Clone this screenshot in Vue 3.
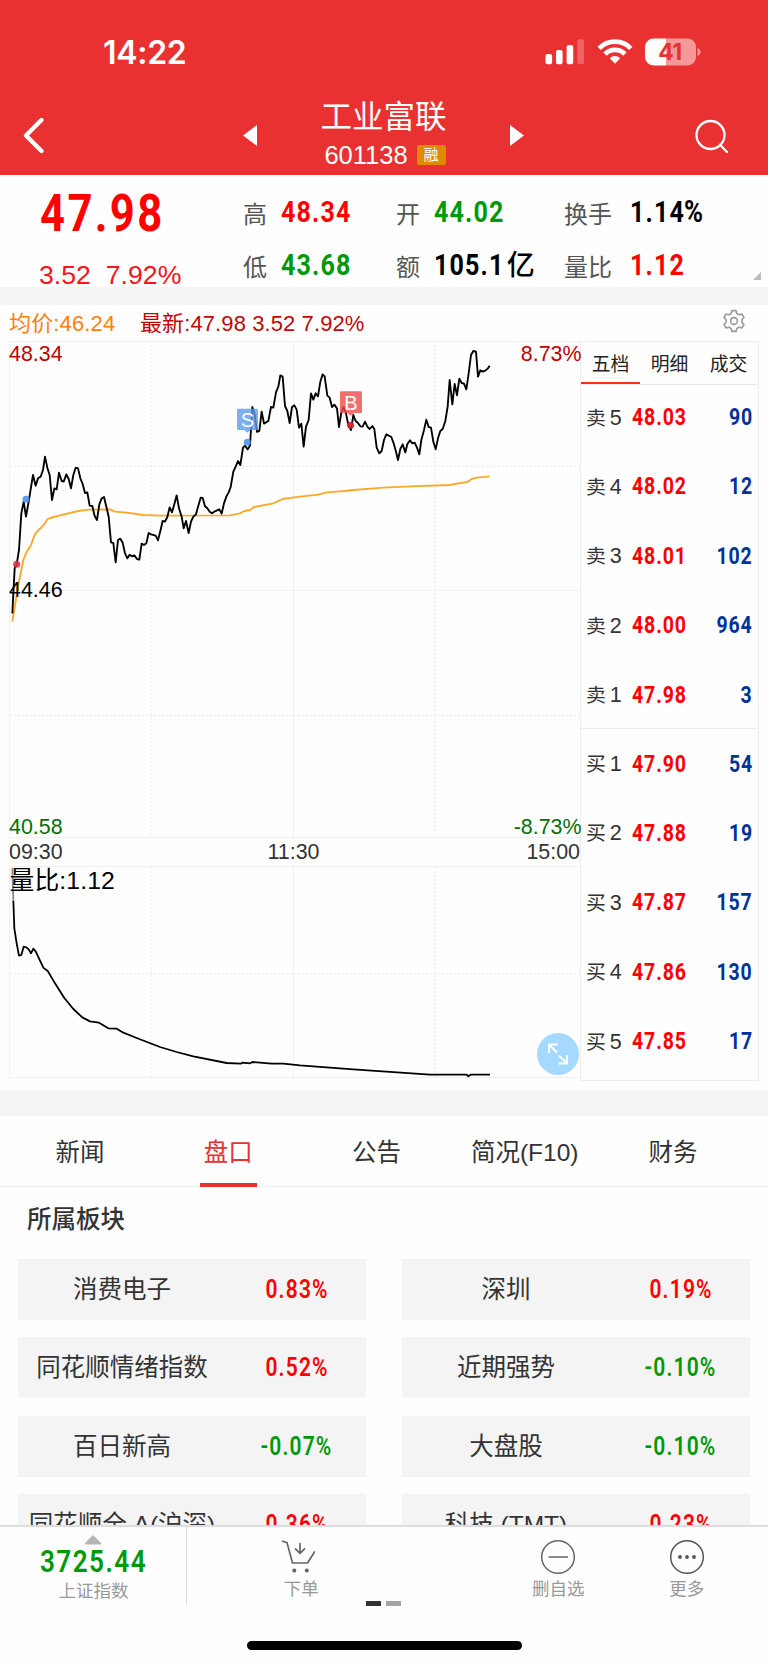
<script setup>
const stats = [
  [{ k: '高', v: '48.34', c: 'up' }, { k: '开', v: '44.02', c: 'down' }, { k: '换手', v: '1.14', p: '%', c: 'flat' }],
  [{ k: '低', v: '43.68', c: 'down' }, { k: '额', v: '105.1', u: '亿', c: 'flat' }, { k: '量比', v: '1.12', c: 'up' }],
]
const asks = [
  ['卖', 5, '48.03', 90], ['卖', 4, '48.02', 12], ['卖', 3, '48.01', 102], ['卖', 2, '48.00', 964], ['卖', 1, '47.98', 3],
]
const bids = [
  ['买', 1, '47.90', 54], ['买', 2, '47.88', 19], ['买', 3, '47.87', 157], ['买', 4, '47.86', 130], ['买', 5, '47.85', 17],
]
const tabs = ['新闻', '盘口', '公告', '简况(F10)', '财务']
const sectors = [
  ['消费电子', '0.83%'], ['深圳', '0.19%'],
  ['同花顺情绪指数', '0.52%'], ['近期强势', '-0.10%'],
  ['百日新高', '-0.07%'], ['大盘股', '-0.10%'],
  ['同花顺全 A(沪深)', '0.36%'], ['科技 (TMT)', '0.23%'],
]
const priceLine = '37,835 44,700 50,688 57,645 64,535 71,500 78,545 86,500 99,420 107,452 114,430 122,425 129,405 135,365 142,398 149,420 156,495 163,460 170,463 177,413 185,438 191,440 199,418 206,432 213,460 220,420 227,398 234,400 241,430 248,447 255,474 262,472 269,512 277,513 284,543 291,555 298,508 305,490 312,486 319,515 326,545 333,622 340,624 347,682 354,615 361,611 368,623 375,655 382,670 389,659 396,664 403,661 411,672 418,674 425,626 432,630 439,625 446,594 453,598 467,602 474,616 481,588 488,558 495,560 502,546 509,517 516,532 523,508 530,481 537,520 545,545 551,580 558,558 566,594 573,560 580,545 588,538 595,512 602,488 608,489 615,514 622,520 629,530 636,535 643,530 658,523 665,536 672,505 679,485 686,472 692,456 700,410 707,395 714,378 721,390 729,338 735,332 743,343 750,332 757,216 764,238 771,291 778,288 785,230 792,266 805,258 813,216 820,218 828,172 835,155 841,121 848,125 855,213 862,228 869,264 876,216 883,211 890,224 897,278 904,266 911,335 918,275 926,255 933,175 940,194 947,175 954,184 961,140 968,118 974,124 982,182 989,188 996,216 1003,209 1011,220 1017,276 1024,232 1031,216 1038,235 1045,270 1053,285 1060,240 1067,258 1074,264 1081,274 1088,275 1095,260 1102,275 1109,282 1117,273 1123,282 1130,338 1138,355 1145,348 1152,315 1159,298 1174,306 1181,325 1188,350 1194,375 1201,342 1208,328 1216,352 1222,328 1230,316 1237,325 1244,323 1251,338 1258,358 1264,315 1272,285 1279,254 1286,276 1293,278 1300,320 1307,343 1314,310 1321,288 1328,282 1336,258 1343,215 1349,135 1357,208 1364,147 1371,181 1378,131 1385,144 1392,146 1399,163 1406,115 1413,60 1420,48 1428,50 1434,125 1441,106 1448,110 1456,107 1463,101 1469,92'
const avgLine = '37,860 50,780 57,740 64,705 71,672 78,655 93,630 103,602 110,591 130,571 143,552 150,549 180,541 235,528 265,524 330,523 345,530 380,533 430,540 480,542 690,541 720,535 733,528 750,525 762,516 820,505 848,492 900,485 955,479 980,472 1035,468 1060,465 1150,458 1230,454 1350,450 1375,445 1402,441 1415,432 1430,428 1469,424'
const volLine = '37,204 40,303 43,385 50,430 57,467 64,465 71,440 79,442 86,448 93,460 100,446 107,454 130,503 144,514 165,550 193,594 220,627 247,652 270,664 297,668 325,685 350,686 370,698 410,714 480,741 530,756 580,769 680,789 722,791 727,788 750,790 757,786 815,791 850,791 900,796 1060,808 1290,824 1400,824 1405,829 1412,824 1470,824'
const gear = (() => {
  const pts = []
  for (let i = 0; i < 6; i++) {
    const a = (i * 60 - 90) * Math.PI / 180
    for (const [d, r] of [[-0.36, 8], [-0.19, 10.6], [0.19, 10.6], [0.36, 8]]) {
      pts.push(`${(12 + r * Math.cos(a + d)).toFixed(2)},${(12 + r * Math.sin(a + d)).toFixed(2)}`)
    }
  }
  return pts.join(' ')
})()
</script>

<template>
  <div class="screen">
    <header class="top">
      <div class="status">
        <span class="clock">14:22</span>
        <svg class="sys" width="156" height="28" viewBox="0 0 156 28">
          <g fill="#fff">
            <rect x="0.5" y="16" width="6.6" height="10.3" rx="2" />
            <rect x="11" y="12" width="6.6" height="14.3" rx="2" />
            <rect x="21.6" y="7" width="6.6" height="19.3" rx="2" />
            <rect x="32.4" y="1.3" width="6.6" height="25" rx="2" opacity=".25" />
            <path d="M70 25.7 L64.8 20.2 A7.4 7.4 0 0 1 75.2 20.2 Z" />
          </g>
          <g fill="none" stroke="#fff" stroke-width="4.8">
            <path d="M54.2 10.3 A22 22 0 0 1 85.8 10.3" />
            <path d="M60 16 A14 14 0 0 1 80 16" />
          </g>
          <path d="M121 .5 H108.5 a8.5 8.5 0 0 0 -8.5 8.5 v10 a8.5 8.5 0 0 0 8.5 8.5 H121 Z" fill="#fff" />
          <path d="M121 .5 H142.5 a8.5 8.5 0 0 1 8.5 8.5 v10 a8.5 8.5 0 0 1 -8.5 8.5 H121 Z" fill="#fff" opacity=".5" />
          <path d="M152.5 10 q3 1 3 4 t-3 4 Z" fill="#fff" opacity=".5" />
          <text x="125" y="22" text-anchor="middle" class="bat">41</text>
        </svg>
      </div>
      <div class="nav">
        <svg class="back" width="24" height="40" viewBox="0 0 24 40"><path d="M20.5 5 L5 20.5 L20.5 36" fill="none" stroke="#fff" stroke-width="4.4" stroke-linecap="round" stroke-linejoin="round" /></svg>
        <svg class="tri" width="14" height="22" viewBox="0 0 14 22"><path d="M14 0 V21 L0 10.5 Z" fill="#fff" /></svg>
        <div class="title">
          <div class="name">工业富联</div>
          <div class="code"><span>601138</span><i>融</i></div>
        </div>
        <svg class="tri" width="14" height="22" viewBox="0 0 14 22"><path d="M0 0 V21 L14 10.5 Z" fill="#fff" /></svg>
        <svg class="search" width="36" height="36" viewBox="0 0 36 36"><g fill="none" stroke="#fff" stroke-width="2.3"><circle cx="16.5" cy="16" r="14" /><path d="M26 25.8 L33 33" stroke-linecap="round" /></g></svg>
      </div>
    </header>

    <section class="quote">
      <div class="last">
        <div class="big"><span class="din">47.98</span></div>
        <div class="chg">3.52&nbsp; 7.92%</div>
      </div>
      <div class="stats">
        <div v-for="(row, i) in stats" :key="i" class="srow">
          <div v-for="s in row" :key="s.k" class="stat">
            <label>{{ s.k }}</label>
            <span class="val" :class="s.c"><span class="din">{{ s.v }}<small v-if="s.p">{{ s.p }}</small></span><em v-if="s.u">{{ s.u }}</em></span>
          </div>
        </div>
      </div>
      <svg class="corner" width="8" height="8" viewBox="0 0 8 8"><path d="M8 0 V8 H0 Z" fill="#bbb" /></svg>
    </section>
    <div class="gap"></div>

    <section class="market">
      <div class="legend">
        <span class="avg">均价:46.24</span><span class="cur">最新:47.98 3.52 7.92%</span>
        <svg class="gear" width="24" height="24" viewBox="0 0 24 24"><g fill="none" stroke="#999" stroke-width="1.6" stroke-linejoin="round"><polygon :points="gear" /><circle cx="12" cy="12" r="3.4" /></g></svg>
      </div>
      <div class="body">
        <div class="charts">
          <svg width="581" height="737" viewBox="0 341 581 737">
            <g fill="none" stroke="#efefef" stroke-width="1">
              <path d="M9.5 341.5 H581 M9.5 590.5 H581 M9.5 837.5 H581 M9.5 866.5 H581 M9.5 1077.5 H581 M9.5 341.5 V838 M9.5 866.5 V1078 M293.5 341.5 V838 M293.5 866.5 V1078" />
              <path stroke-dasharray="2 2" stroke-width="1.4" d="M151 341 V838 M435 341 V838 M151 867 V1078 M435 867 V1078 M10 466.5 H580 M10 715.5 H580 M10 973.5 H580" />
            </g>
            <g transform="translate(0 335) scale(.33333)" fill="none" stroke-linejoin="round">
              <polyline :points="avgLine" stroke="#ffa826" stroke-width="5.6" />
              <polyline :points="priceLine" stroke="#000" stroke-width="5.6" />
              <circle cx="50" cy="688" r="10.5" fill="#dd3344" opacity=".9" />
              <circle cx="78" cy="493" r="10.5" fill="#4c92f0" opacity=".9" />
              <circle cx="742" cy="322" r="10.5" fill="#4c92f0" opacity=".9" />
              <circle cx="1052" cy="271" r="10.5" fill="#e0232e" opacity=".9" />
              <path d="M715 221 h55 q4 0 4 4 v56 q0 4 -4 4 h-18 l-10 8 l-10 -8 h-17 q-4 0 -4 -4 v-56 q0 -4 4 -4 Z" fill="#5c9bee" opacity=".8" />
              <path d="M1024 169 h58 q4 0 4 4 v57 q0 4 -4 4 h-20 l-10 8 l-10 -8 h-18 q-4 0 -4 -4 v-57 q0 -4 4 -4 Z" fill="#ec4b4b" opacity=".8" />
            </g>
            <g transform="translate(0 800) scale(.33333)" fill="none">
              <polyline :points="volLine" stroke="#000" stroke-width="5.4" stroke-linejoin="round" />
            </g>
            <rect x="10" y="867" width="107" height="34" fill="#fefefe" opacity=".55" />
            <g class="t">
              <text x="247.3" y="427" class="mk">S</text>
              <text x="351" y="409.5" class="mk">B</text>
              <text x="9" y="361" fill="#c00000">48.34</text>
              <text x="9" y="597" fill="#000">44.46</text>
              <text x="9" y="834" fill="#007000">40.58</text>
              <text x="581.5" y="361" fill="#c00000" text-anchor="end">8.73%</text>
              <text x="581.5" y="834" fill="#007000" text-anchor="end">-8.73%</text>
              <text x="9" y="859" fill="#333">09:30</text>
              <text x="293.5" y="859" fill="#333" text-anchor="middle">11:30</text>
              <text x="580" y="859" fill="#333" text-anchor="end">15:00</text>
              <text x="9.5" y="889" fill="#000" class="vr">量比:1.12</text>
            </g>
          </svg>
          <button class="expand">
            <svg width="42" height="42" viewBox="0 0 42 42"><g fill="none" stroke="#fff" stroke-width="2"><path d="M12 20 V11.5 H20.5 M12 11.5 L20 19.5" /><path d="M30 22 V30.5 H21.5 M30 30.5 L22 22.5" /></g></svg>
          </button>
        </div>
        <aside class="book">
          <div class="btabs"><span class="on">五档</span><span>明细</span><span>成交</span></div>
          <div class="rows">
            <div v-for="r in asks" :key="r[2]" class="brow"><span class="lv">{{ r[0] }}<b>{{ r[1] }}</b></span><span class="pr"><span class="din">{{ r[2] }}</span></span><span class="qt"><span class="din">{{ r[3] }}</span></span></div>
          </div>
          <div class="rows bid">
            <div v-for="r in bids" :key="r[2]" class="brow"><span class="lv">{{ r[0] }}<b>{{ r[1] }}</b></span><span class="pr"><span class="din">{{ r[2] }}</span></span><span class="qt"><span class="din">{{ r[3] }}</span></span></div>
          </div>
        </aside>
      </div>
    </section>
    <div class="gap wide"></div>

    <nav class="tabs">
      <div v-for="(t, i) in tabs" :key="t" :class="{ on: i === 1 }">{{ t }}</div>
    </nav>
    <section class="sectors">
      <h3>所属板块</h3>
      <div class="cards">
        <div v-for="s in sectors" :key="s[0]" class="card">
          <span class="sn">{{ s[0] }}</span>
          <span class="sp" :class="s[1][0] === '-' ? 'down' : 'up'"><span class="din">{{ s[1] }}</span></span>
        </div>
      </div>
    </section>

    <footer class="bar">
      <div class="items">
        <div class="index">
          <svg width="16" height="10" viewBox="0 0 16 10"><path d="M8 0 L16 8 V9.5 H0 V8 Z" fill="#b5b5b5" /></svg>
          <div class="idx down"><span class="din">3725.44</span></div>
          <div class="cap">上证指数</div>
        </div>
        <div class="acts">
          <div>
            <svg width="36" height="36" viewBox="0 0 36 36"><g fill="none" stroke="#666" stroke-width="1.7" stroke-linecap="round" stroke-linejoin="round"><path d="M1.5 2.3 L6 3.6 L11.5 24 H26.5 L33.5 13" /><path d="M19 4.5 V14 M14.5 9.8 L19 14.3 L23.5 9.8" /></g><circle cx="13.3" cy="31.5" r="2" fill="#666" /><circle cx="25.8" cy="31.5" r="2" fill="#666" /></svg>
            <div class="cap">下单</div>
          </div>
          <div></div>
          <div>
            <svg width="36" height="36" viewBox="0 0 36 36"><g fill="none" stroke="#666" stroke-width="1.5"><circle cx="18" cy="18" r="16.3" /><path d="M8.5 18 H28" /></g></svg>
            <div class="cap">删自选</div>
          </div>
          <div>
            <svg width="36" height="36" viewBox="0 0 36 36"><circle cx="18" cy="18" r="16.3" fill="none" stroke="#555" stroke-width="1.5" /><g fill="#555"><circle cx="11" cy="18" r="1.9" /><circle cx="18" cy="18" r="1.9" /><circle cx="25" cy="18" r="1.9" /></g></svg>
            <div class="cap">更多</div>
          </div>
        </div>
      </div>
      <div class="pager"><i></i><i></i></div>
      <div class="home"></div>
    </footer>
  </div>
</template>

<style>
body { background: #fefefe; }
</style>

<style scoped>
* { box-sizing: border-box; }
.screen { width: 768px; height: 1665px; overflow: hidden; position: relative; background: #fefefe; color: #333; font-family: "Liberation Sans", "Noto Sans CJK SC", sans-serif; display: flex; flex-direction: column; }
.screen > * { flex: none; }
svg { display: block; }
i, em { font-style: normal; }
.din { display: inline-block; font-family: Roboto, sans-serif; font-weight: 700; letter-spacing: .045em; transform: scaleX(.83); transform-origin: left center; }
.up { color: #f00; }
.down { color: #00990a; }
.flat { color: #000; }

.top { height: 174.5px; background: #e93131; color: #fff; }
.status { height: 96px; padding: 0 67px 0 103px; display: flex; justify-content: space-between; }
.clock { font: 600 32px/40px Inter, sans-serif; letter-spacing: -.3px; margin-top: 33px; }
.sys { margin-top: 37.5px; }
.bat { font: 700 23px Inter, sans-serif; fill: #e93131; letter-spacing: -.5px; }
.nav { display: flex; height: 78px; align-items: flex-start; }
.back { margin: 19px 0 0 21px; }
.nav .tri { margin-top: 28.5px; }
.back + .tri { margin-left: 198px; }
.title { width: 253px; text-align: center; }
.name { font-size: 31.5px; line-height: 40px; padding-top: 1px; }
.code { display: flex; justify-content: center; align-items: center; gap: 9px; font-size: 25.5px; line-height: 30px; padding: 3px 0 0 3px; }
.code i { width: 29px; height: 20px; line-height: 20px; background: #e08a00; border-radius: 2px; font-size: 15px; }
.search { margin: 23px 0 0 169.5px; }

.quote { height: 112.5px; display: flex; position: relative; }
.last { width: 243px; padding-left: 39px; }
.big { font-size: 52.5px; line-height: 60px; margin-top: 8.5px; color: #f00; }
.big .din { letter-spacing: .055em; margin-left: .5px; }
.chg { font-size: 26.7px; line-height: 30px; margin-top: 16.5px; color: #f8141c; white-space: nowrap; }
.stats { padding-top: 11px; }
.srow { display: grid; grid-template-columns: 153px 168px 190px; height: 53px; }
.stat { display: flex; line-height: 52px; white-space: nowrap; }
.stat label { color: #555; font-size: 24px; padding-top: 3.5px; margin-right: 14px; line-height: 52px; }
.stat:last-child label { margin-right: 17.5px; }
.val { font-size: 30.2px; }
.val small { font-size: 31px; margin-left: -1px; }
.val em { font-size: 28px; font-weight: 500; margin-left: -12px; }
.corner { position: absolute; right: 7px; bottom: 7px; }
.gap { height: 18px; background: #f4f4f4; }
.gap.wide { height: 26px; margin-top: 9px; }

.market { height: 776px; }
.legend { height: 36px; padding: 0 22px 0 9px; display: flex; font-size: 22px; line-height: 38px; }
.avg { color: #ff7f0e; width: 131px; letter-spacing: .15px; }
.cur { color: #c00808; letter-spacing: .1px; }
.gear { margin: 4px 0 0 auto; }
.body { display: flex; height: 740px; }
.charts { width: 580px; position: relative; }
.charts > svg { overflow: visible; }
.t { font: 21.4px "Liberation Sans", "Noto Sans CJK SC", sans-serif; }
.mk { font-size: 20px; fill: #fff; text-anchor: middle; }
.vr { font-size: 24.8px; letter-spacing: .1px; }
.expand { position: absolute; left: 537px; top: 692px; width: 42px; height: 42px; padding: 0; border: 0; border-radius: 50%; background: #a5d9ff; }
.book { width: 179px; border: 1px solid #ededed; font-size: 20px; }
.btabs { height: 43px; display: grid; grid-template-columns: repeat(3, 1fr); text-align: center; font-size: 18.8px; line-height: 45px; border-bottom: 1px solid #e8e8e8; color: #222; }
.btabs .on { border-bottom: 2.5px solid #ff2d16; height: 42px; }
.rows { height: 345.5px; margin-top: -3px; padding-top: 1px; }
.bid { margin-top: 0; border-top: 1px solid #ededed; }
.brow { display: grid; grid-template-columns: 46px 60px 1fr; height: 69.4px; line-height: 69.4px; padding: 0 5px 0 5px; white-space: nowrap; }
.lv { color: #333; font-size: 19.8px; padding-top: .6px; }
.lv b { font-weight: 400; font-size: 21.5px; margin-left: 4px; }
.pr { color: #f00; font-size: 23.5px; }
.qt { color: #003399; font-size: 23.5px; text-align: right; }
.qt .din { transform-origin: right center; }

.tabs { height: 71px; padding: 0 21px 0 6px; display: grid; grid-template-columns: repeat(5, 1fr); border-bottom: 1px solid #eee; text-align: center; font-size: 24.5px; line-height: 74px; }
.tabs > div { height: 70px; }
.tabs .on { color: #e93131; position: relative; }
.tabs .on::after { content: ""; position: absolute; left: 46px; bottom: -1px; width: 57px; height: 4px; background: #e93131; }
h3 { margin: 0; padding-left: 27px; font-size: 24.5px; font-weight: 500; line-height: 65px; height: 71.5px; }
.cards { display: grid; grid-template-columns: 348px 348px; gap: 17.6px 36px; padding-left: 18px; }
.card { height: 61px; background: #f4f4f4; display: grid; grid-template-columns: 208px 140px; text-align: center; line-height: 61px; font-size: 24.5px; white-space: nowrap; }
.sp { line-height: 60px; font-size: 25.3px; padding-left: 1.5px; }
.sp .din { transform-origin: center; font-weight: 600; letter-spacing: .055em; }

.bar { position: absolute; left: 0; right: 0; bottom: 0; height: 140px; background: #fefefe; border-top: 2px solid #ddd; }
.items { display: flex; height: 77px; }
.index { width: 187px; border-right: 1.5px solid #d8d8d8; display: flex; flex-direction: column; align-items: center; padding-top: 8px; }
.idx { font-size: 31.5px; line-height: 34px; margin-top: -1.5px; padding-left: 2px; }
.idx .din { transform-origin: center; font-weight: 600; letter-spacing: .055em; }
.cap { font-size: 17.5px; line-height: 24px; color: #999; text-align: center; }
.index .cap { margin-top: 0; padding-left: 1px; }
.acts { display: grid; grid-template-columns: repeat(4, 128.5px); padding-left: 50px; }
.acts > div { display: flex; flex-direction: column; align-items: center; padding-top: 12px; }
.acts .cap { margin-top: 2px; }
.acts > div:first-child svg { margin-left: -4px; }
.pager { display: flex; gap: 5.5px; padding-left: 366px; margin-top: -3.5px; height: 5px; }
.pager i { width: 14.5px; background: #333; }
.pager i + i { background: #a5a5a5; }
.home { width: 275px; height: 9.5px; border-radius: 5px; background: #000; margin: 35px 0 0 246.5px; }
</style>
